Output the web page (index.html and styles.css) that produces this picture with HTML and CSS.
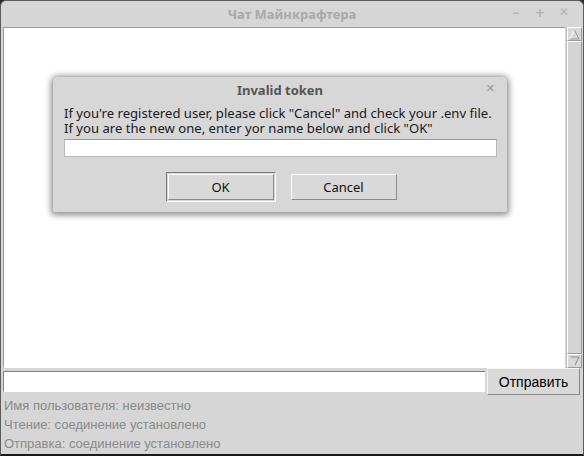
FILE: index.html
```html
<!DOCTYPE html>
<html>
<head>
<meta charset="utf-8">
<link rel="stylesheet" href="styles.css">
</head>
<body>
<div class="window">
  <div class="titlebar">
    <span class="title">Чат Майнкрафтера</span>
    <div class="controls">
      <span class="ctl">&#8211;</span>
      <span class="ctl">+</span>
      <span class="ctl close">&#10005;</span>
    </div>
  </div>
  <div class="body">
    <div class="chat">
      <div class="log"></div>
      <div class="scrollbar">
        <div class="arrow up"><svg width="13" height="13" viewBox="0 0 13 13"><polygon points="6.5,2 11,11 2,11" fill="none" stroke="#fff" stroke-width="1"/><polyline points="2,11 11,11 6.5,2" fill="none" stroke="#8a8a8a" stroke-width="1"/></svg></div>
        <div class="track"></div>
        <div class="arrow down"><svg width="13" height="13" viewBox="0 0 13 13"><polygon points="2,2 11,2 6.5,11" fill="none" stroke="#8a8a8a" stroke-width="1"/><polyline points="2,2 6.5,11" fill="none" stroke="#fff" stroke-width="1"/></svg></div>
      </div>
    </div>
    <div class="sendrow">
      <div class="msg"></div>
      <div class="sendbtn">Отправить</div>
    </div>
    <div class="status">
      <div class="line">Имя пользователя: неизвестно</div>
      <div class="line">Чтение: соединение установлено</div>
      <div class="line">Отправка: соединение установлено</div>
    </div>
  </div>

  <div class="dialog">
    <div class="dtitle">
      <span>Invalid token</span>
      <span class="dclose">&#10005;</span>
    </div>
    <div class="dbody">
      <p class="dtext">If you're registered user, please click "Cancel" and check your .env file.<br>If you are the new one, enter yor name below and click "OK"</p>
      <div class="dinput"></div>
      <div class="dbuttons">
        <div class="focus"><div class="btn">OK</div></div>
        <div class="btn cancel">Cancel</div>
      </div>
    </div>
  </div>
</div>
</body>
</html>
```
FILE: styles.css
```css
html, body {
  margin: 0;
  padding: 0;
  background: #2a2a2a;
}
.window {
  position: relative;
  width: 584px;
  height: 456px;
  box-sizing: border-box;
  background: #d6d6d6;
  border: 1px solid #5a5a5a;
  border-bottom: 2px solid #1a1a1a;
  border-radius: 6px 6px 0 0;
  overflow: hidden;
  display: flex;
  flex-direction: column;
}
.titlebar {
  height: 26px;
  flex: none;
  position: relative;
  display: flex;
  align-items: center;
  justify-content: center;
}
.title {
  font-family: "Noto Sans", sans-serif;
  font-weight: bold;
  font-size: 13px;
  color: #a9a9a9;
}
.controls {
  position: absolute;
  right: 13px;
  top: 4px;
  display: flex;
  gap: 12px;
  font-family: "DejaVu Sans", sans-serif;
  font-weight: bold;
  font-size: 13px;
  color: #b4b4b4;
}
.ctl { width: 12px; text-align: center; }
.close { font-size: 12px; }
.body {
  flex: 1;
  display: flex;
  flex-direction: column;
  padding: 0 1px 0 2px;
}
.chat {
  display: flex;
  height: 341px;
}
.log {
  flex: 1;
  background: #fff;
  border-top: 1px solid #9a9a9a;
  border-left: 1px solid #9a9a9a;
  border-bottom: 1px solid #fff;
}
.scrollbar {
  width: 15px;
  margin-left: 1px;
  display: flex;
  flex-direction: column;
  background: #d9d9d9;
  border-left: 1px solid #bdbdbd;
}
.arrow {
  height: 14px;
  display: flex;
  align-items: center;
  justify-content: center;
  border: 1px solid #9a9a9a;
  border-top-color: #fff;
  border-left-color: #fff;
  box-sizing: border-box;
}
.track {
  flex: 1;
  border: 1px solid #9a9a9a;
  border-top-color: #fff;
  border-left-color: #fff;
  background: #d4d4d4;
}
.sendrow {
  display: flex;
  align-items: center;
  gap: 2px;
  height: 27px;
}
.msg {
  width: 481px;
  height: 19px;
  background: #fff;
  border-top: 1px solid #808080;
  border-left: 1px solid #808080;
  border-bottom: 1px solid #fff;
}
.sendbtn {
  width: 93px;
  height: 27px;
  box-sizing: border-box;
  background: #d9d9d9;
  border: 1px solid #8a8a8a;
  border-top-color: #f4f4f4;
  border-left-color: #f4f4f4;
  display: flex;
  align-items: center;
  justify-content: center;
  font-family: "Liberation Sans", Arial, sans-serif;
  font-size: 14px;
  color: #000;
}
.status {
  padding-top: 1px;
}
.line {
  height: 19px;
  line-height: 19px;
  font-family: "Liberation Sans", Arial, sans-serif;
  font-size: 13px;
  color: #8a8a8a;
  padding-left: 1px;
}
.dialog {
  position: absolute;
  left: 52px;
  top: 76px;
  width: 454px;
  height: 135px;
  background: #d7d7d7;
  border-radius: 5px 5px 2px 2px;
  box-shadow: 0 1px 6px 2px rgba(0,0,0,0.45);
  display: flex;
  flex-direction: column;
}
.dtitle {
  height: 25px;
  flex: none;
  position: relative;
  display: flex;
  align-items: center;
  justify-content: center;
  font-family: "Noto Sans", sans-serif;
  font-weight: bold;
  font-size: 13px;
  color: #555;
}
.dclose {
  position: absolute;
  right: 12px;
  top: 5px;
  font-family: "DejaVu Sans", sans-serif;
  font-weight: bold;
  font-size: 11px;
  color: #999;
}
.dbody {
  padding: 4px 10px 0 11px;
}
.dtext {
  margin: 0;
  font-family: "Noto Sans", sans-serif;
  font-size: 13.1px;
  line-height: 15px;
  color: #1a1a1a;
  white-space: nowrap;
}
.dinput {
  margin-top: 3px;
  height: 16px;
  background: #fff;
  border: 1px solid #b8b8b8;
  border-top-color: #9a9a9a;
}
.dbuttons {
  display: flex;
  justify-content: center;
  align-items: center;
  gap: 15px;
  margin-top: 15px;
  padding-left: 1px;
}
.focus {
  border: 1px solid #7a7a7a;
  border-right-color: #fff;
  border-bottom-color: #fff;
  padding: 1px;
}
.btn {
  width: 106px;
  height: 26px;
  box-sizing: border-box;
  border: 1px solid #8a8a8a;
  border-top-color: #fbfbfb;
  border-left-color: #fbfbfb;
  background: #d9d9d9;
  display: flex;
  align-items: center;
  justify-content: center;
  font-family: "Noto Sans", sans-serif;
  font-size: 13px;
  color: #111;
}
.cancel { width: 106px; }
```
